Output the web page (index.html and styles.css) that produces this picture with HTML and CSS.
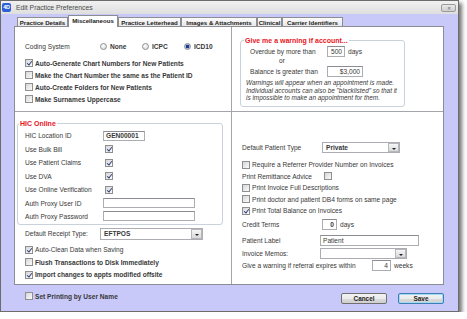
FILE: index.html
```html
<!DOCTYPE html>
<html lang="en">
<head>
    <meta charset="UTF-8">
    <title>Edit Practice Preferences</title>
    <link rel="stylesheet" href="styles.css">
</head>
<body>
    <div class="window">
        <div class="titlebar">
            <span class="app-icon">4D</span>
            <span class="title">Edit Practice Preferences</span>
            <span class="close">&#x2715;</span>
        </div>

        <div class="client">
            <div class="tabs">
                <div class="tab tab-details">Practice Details</div>
                <div class="tab tab-misc active">Miscellaneous</div>
                <div class="tab tab-letter">Practice Letterhead</div>
                <div class="tab tab-images">Images &amp; Attachments</div>
                <div class="tab tab-clinical">Clinical</div>
                <div class="tab tab-carrier">Carrier Identifiers</div>
            </div>

            <div class="panel">
                <!-- coding + chart numbers -->
                <div class="sect sect-coding">
                    <div class="row coding-row">
                        <span class="coding-label">Coding System</span>
                        <span class="radio-opt"><span class="rb"></span>None</span>
                        <span class="radio-opt"><span class="rb"></span>ICPC</span>
                        <span class="radio-opt"><span class="rb on"></span>ICD10</span>
                    </div>
                    <div class="checks">
                        <div class="check-row bold"><span class="cb on"></span>Auto-Generate Chart Numbers for New Patients</div>
                        <div class="check-row bold"><span class="cb"></span>Make the Chart Number the same as the Patient ID</div>
                        <div class="check-row bold"><span class="cb"></span>Auto-Create Folders for New Patients</div>
                        <div class="check-row bold"><span class="cb"></span>Make Surnames Uppercase</div>
                    </div>
                </div>

                <!-- account warning -->
                <div class="sect sect-warning">
                    <fieldset class="group warn">
                        <legend>Give me a warning if account...</legend>
                        <div class="row warn-row">
                            <span class="warn-label">Overdue by more than</span>
                            <span class="tb num w-days">500</span>
                            <span class="unit">days</span>
                        </div>
                        <div class="or-row">or</div>
                        <div class="row warn-row">
                            <span class="warn-label">Balance is greater than</span>
                            <span class="tb num w-balance">$3,000</span>
                        </div>
                        <p class="note">Warnings will appear when an appointment is made. Individual accounts can also be "blacklisted" so that it is impossible to make an appointment for them.</p>
                    </fieldset>
                </div>

                <!-- HIC online + receipts -->
                <div class="sect sect-hic">
                    <fieldset class="group hic">
                        <legend>HIC Online</legend>
                        <div class="hic-row">
                            <span class="hic-label">HIC Location ID</span>
                            <span class="tb bold w-loc">GEN00001</span>
                        </div>
                        <div class="hic-row">
                            <span class="hic-label">Use Bulk Bill</span>
                            <span class="cb on hic-cb"></span>
                        </div>
                        <div class="hic-row">
                            <span class="hic-label">Use Patient Claims</span>
                            <span class="cb on hic-cb"></span>
                        </div>
                        <div class="hic-row">
                            <span class="hic-label">Use DVA</span>
                            <span class="cb on hic-cb"></span>
                        </div>
                        <div class="hic-row">
                            <span class="hic-label">Use Online Verification</span>
                            <span class="cb on hic-cb"></span>
                        </div>
                        <div class="hic-row short">
                            <span class="hic-label">Auth Proxy User ID</span>
                            <span class="tb w-proxy"></span>
                        </div>
                        <div class="hic-row short">
                            <span class="hic-label">Auth Proxy Password</span>
                            <span class="tb w-proxy"></span>
                        </div>
                    </fieldset>

                    <div class="row receipt-row">
                        <span class="receipt-label">Default Receipt Type:</span>
                        <span class="dd w-receipt"><span class="dd-value">EFTPOS</span><span class="dd-btn"></span></span>
                    </div>
                    <div class="checks lower-checks">
                        <div class="check-row"><span class="cb on"></span>Auto-Clean Data when Saving</div>
                        <div class="check-row bold"><span class="cb"></span>Flush Transactions to Disk Immediately</div>
                        <div class="check-row bold"><span class="cb on"></span>Import changes to appts modified offsite</div>
                    </div>
                </div>

                <!-- invoices -->
                <div class="sect sect-invoice">
                    <div class="row patient-type-row">
                        <span class="inv-label">Default Patient Type</span>
                        <span class="dd w-ptype"><span class="dd-value">Private</span><span class="dd-btn"></span></span>
                    </div>
                    <div class="checks inv-checks">
                        <div class="inv-check"><span class="cb"></span>Require a Referrer Provider Number on Invoices</div>
                        <div class="inv-check"><span class="inv-label">Print Remittance Advice</span><span class="cb"></span></div>
                        <div class="inv-check"><span class="cb"></span>Print Invoice Full Descriptions</div>
                        <div class="inv-check"><span class="cb"></span>Print doctor and patient DB4 forms on same page</div>
                        <div class="inv-check"><span class="cb on"></span>Print Total Balance on Invoices</div>
                    </div>
                    <div class="row inv-row credit-row">
                        <span class="inv-label">Credit Terms</span>
                        <span class="tb num bold w-credit">0</span>
                        <span class="unit">days</span>
                    </div>
                    <div class="row inv-row label-row">
                        <span class="inv-label narrow">Patient Label</span>
                        <span class="tb w-plabel">Patient</span>
                    </div>
                    <div class="row inv-row memo-row">
                        <span class="inv-label narrow">Invoice Memos:</span>
                        <span class="dd w-memo"><span class="dd-value"></span><span class="dd-btn"></span></span>
                    </div>
                    <div class="row inv-row referral-row">
                        <span class="referral-label">Give a warning if referral expires within</span>
                        <span class="tb num w-weeks">4</span>
                        <span class="unit">weeks</span>
                    </div>
                </div>
            </div>

            <div class="footer">
                <div class="check-row bold"><span class="cb"></span>Set Printing by User Name</div>
                <div class="buttons">
                    <button class="btn">Cancel</button>
                    <button class="btn btn-default">Save</button>
                </div>
            </div>
        </div>
    </div>
</body>
</html>
```

FILE: styles.css
```css
/* Base */
:root {
    --frame: #c8c9f9;
    --line: #a3a5ab;
    --group: #c9d1da;
    --red: #e8141c;
    --text: #383838;
    --check: #2b3d7c;
}

body {
    margin: 0;
    background: #fff;
    font-family: "Liberation Sans", Arial, sans-serif;
    font-size: 6.6px;
    color: var(--text);
}

.bold {
    font-weight: bold;
}

/* Window frame */
.window {
    box-sizing: border-box;
    width: 459px;
    height: 312px;
    border: 1px solid #6c6c6c;
    background: var(--frame);
    box-shadow: 3px 3px 4px rgba(0, 0, 0, 0.55);
    display: flex;
    flex-direction: column;
}

.titlebar {
    height: 13px;
    display: flex;
    align-items: center;
    background: linear-gradient(#f1f1f1, #dedede);
    color: #4a4a4a;
}

.app-icon {
    width: 9px;
    height: 9px;
    margin-left: 1px;
    border-radius: 2px;
    background: #2c5fd6;
    color: #fff;
    font-weight: bold;
    font-size: 5.5px;
    line-height: 9px;
    text-align: center;
    letter-spacing: -0.3px;
}

.title {
    margin-left: 5px;
    font-size: 6.8px;
}

.close {
    margin-left: auto;
    margin-right: 2px;
    width: 15px;
    height: 8px;
    box-sizing: border-box;
    border: 1px solid #9a9a9a;
    border-radius: 2px;
    background: linear-gradient(#e9e9e9, #cfcfcf);
    color: #6a6a6a;
    font-size: 5px;
    line-height: 6px;
    text-align: center;
}

.client {
    flex: 1;
    display: flex;
    flex-direction: column;
    padding: 0 14px 0 13px;
}

/* Tabs */
.tabs {
    height: 13px;
    display: flex;
    align-items: flex-end;
    padding-left: 3px;
    margin-bottom: -1px;
}

.tab {
    box-sizing: border-box;
    height: 10px;
    border: 1px solid #8b8d93;
    border-bottom: none;
    background: linear-gradient(#fbfbfb, #e6e6e6);
    font-weight: bold;
    font-size: 6.1px;
    line-height: 9px;
    text-align: center;
    color: #222;
    white-space: nowrap;
}

.tab.active {
    height: 12px;
    background: #fff;
    position: relative;
    z-index: 1;
    line-height: 10px;
}

.tab-details { width: 51px; }
.tab-misc { width: 50px; }
.tab-letter { width: 63px; }
.tab-images { width: 76px; }
.tab-clinical { width: 25px; }
.tab-carrier { width: 61px; }

/* Panel */
.panel {
    box-sizing: border-box;
    height: 259px;
    border: 1px solid #8b8d93;
    background: #fff;
    display: grid;
    grid-template-columns: 217px 1fr;
    grid-template-rows: 85px 1fr;
}

.sect-coding {
    border-right: 1px solid var(--line);
    border-bottom: 1px solid var(--line);
    padding: 13px 0 0 10px;
}

.sect-warning {
    border-bottom: 1px solid var(--line);
    padding: 9px 0 0 8px;
}

.row {
    display: flex;
    align-items: center;
}

.coding-row {
    height: 12px;
}

.coding-label {
    width: 75px;
}

.radio-opt {
    width: 42px;
    display: flex;
    align-items: center;
    gap: 3px;
    font-weight: bold;
}

.checks {
    margin-top: 5px;
}

.check-row {
    height: 12px;
    display: flex;
    align-items: center;
    gap: 2px;
    white-space: nowrap;
}

/* Controls */
.cb {
    position: relative;
    flex: none;
    box-sizing: border-box;
    width: 8px;
    height: 8px;
    border: 1px solid #8e8f92;
    background: linear-gradient(135deg, #d6d6d6, #fbfbfb);
}

.cb.on::after {
    content: "";
    position: absolute;
    left: 2px;
    top: 0;
    width: 1.5px;
    height: 4px;
    border: solid var(--check);
    border-width: 0 1px 1px 0;
    transform: rotate(38deg);
}

.rb {
    flex: none;
    box-sizing: border-box;
    width: 7px;
    height: 7px;
    border-radius: 50%;
    border: 1px solid #8e8f92;
    background: radial-gradient(circle at 40% 35%, #fff, #d3d3d3);
}

.rb.on {
    background: radial-gradient(circle, #1c3a88 0 1.4px, #9fb5dc 2px, #e6e6e6 100%);
}

.tb {
    box-sizing: border-box;
    height: 11px;
    border: 1px solid #abadb3;
    border-top-color: #8a8c92;
    background: #fff;
    padding: 0 2px;
    line-height: 9px;
    white-space: nowrap;
}

.tb.num {
    text-align: right;
}

.unit {
    margin-left: 3px;
}

.dd {
    box-sizing: border-box;
    display: flex;
    height: 12px;
    border: 1px solid #abadb3;
    background: #fff;
    font-weight: bold;
}

.dd-value {
    padding-left: 3px;
    line-height: 10px;
}

.dd-btn {
    position: relative;
    margin: 0 0 0 auto;
    width: 11px;
    box-sizing: border-box;
    border: 1px solid #b5b7bc;
    background: linear-gradient(#f6f6f6, #d9d9d9);
}

.dd-btn::after {
    content: "";
    position: absolute;
    left: 3px;
    top: 4px;
    border: 2px solid transparent;
    border-top: 2px solid #222;
    border-bottom: none;
}

/* Group boxes */
.group {
    margin: 0;
    border: 1px solid var(--group);
    border-radius: 3px;
}

.group legend {
    color: var(--red);
    font-weight: bold;
    font-size: 7px;
    line-height: 9px;
    padding: 0 1px;
}

.warn {
    box-sizing: border-box;
    width: 165px;
    padding: 0 4px 4px 9px;
}

.warn legend {
    margin-left: -6px;
}

.warn-row {
    height: 12px;
}

.warn-label {
    width: 77px;
}

.w-days { width: 18px; }
.w-balance { width: 36px; }

.or-row {
    height: 8px;
    line-height: 8px;
    padding-left: 29px;
}

.note {
    margin: 2px 0 0 -4px;
    font-style: italic;
    font-size: 6.4px;
    line-height: 7.7px;
}

/* HIC section */
.sect-hic {
    border-right: 1px solid var(--line);
    padding-top: 7px;
}

.hic {
    box-sizing: border-box;
    width: 206px;
    margin-left: 2px;
    padding: 1px 0 1px 7px;
}

.hic legend {
    margin-left: -6px;
}

.hic-row {
    height: 13.5px;
    display: flex;
    align-items: center;
}

.hic-row.short {
    height: 13px;
}

.hic-label {
    width: 78px;
}

.hic-cb {
    margin-left: 2px;
}

.w-loc { width: 42px; height: 10px; line-height: 8px; }
.w-proxy { width: 92px; height: 10px; }

.receipt-row {
    height: 12px;
    margin-top: 3px;
    padding-left: 10px;
}

.receipt-label {
    width: 75px;
}

.w-receipt { width: 103px; }

.lower-checks {
    margin-top: 4px;
    padding-left: 10px;
}

.lower-checks .check-row {
    height: 12.5px;
}

/* Invoice section */
.sect-invoice {
    padding: 30px 0 0 10px;
}

.patient-type-row {
    height: 11px;
}

.inv-label {
    width: 80px;
    flex: none;
}

.inv-label.narrow {
    width: 78px;
}

.w-ptype { width: 78px; height: 11px; }

.inv-checks {
    margin-top: 6px;
}

.inv-check {
    height: 11.5px;
    display: flex;
    align-items: center;
    gap: 2px;
    white-space: nowrap;
}

.inv-row {
    height: 12px;
}

.credit-row { margin-top: 2px; }
.label-row { margin-top: 3.5px; }
.memo-row { margin-top: 1px; }

.w-credit { width: 15px; }
.w-plabel { width: 99px; }
.w-memo { width: 87px; height: 11px; }
.w-weeks { width: 19px; }

.referral-label {
    width: 130px;
    white-space: nowrap;
}

/* Footer */
.footer {
    flex: 1;
    display: flex;
    align-items: center;
    padding-left: 11px;
}

.footer .check-row {
    margin-bottom: 4px;
}

.buttons {
    margin-left: auto;
    display: flex;
    gap: 11px;
}

.btn {
    box-sizing: border-box;
    width: 46px;
    height: 11px;
    padding: 0;
    border: 1px solid #707070;
    border-radius: 2px;
    background: linear-gradient(#f3f3f3, #ebebeb 50%, #dcdcdc 50%, #cfcfcf);
    font-family: inherit;
    font-size: 6.4px;
    font-weight: bold;
    color: #222;
}

.btn-default {
    border-color: #3c7fb1;
    box-shadow: inset 0 0 0 1px #a6d9f4;
}
```
